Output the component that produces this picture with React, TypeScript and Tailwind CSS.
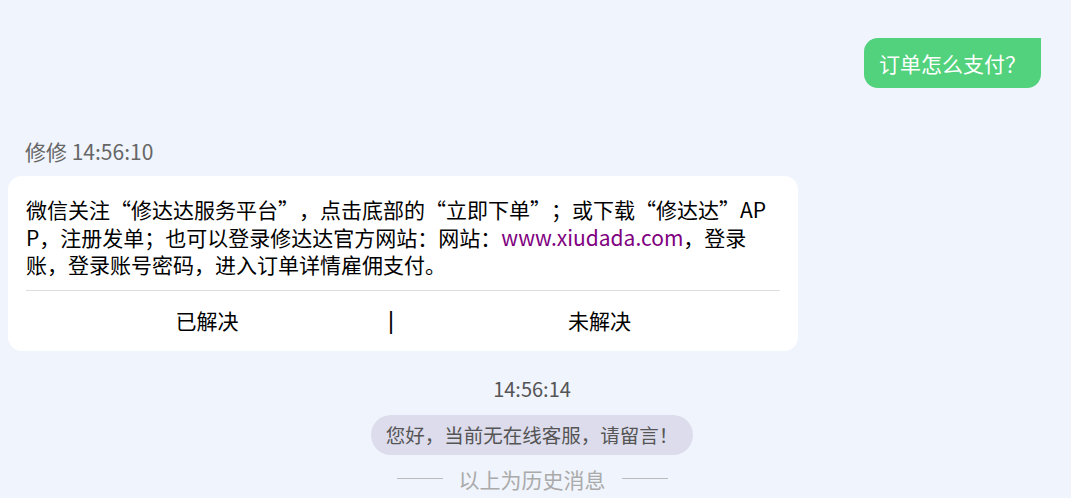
import React from "react";

const font = { fontFamily: '"Noto Sans CJK SC", "Noto Sans", sans-serif' };

// 全角引号：左引号靠右，右引号靠左
function LQ() {
  return <span className="inline-block w-[21px] text-right">“</span>;
}
function RQ() {
  return <span className="inline-block w-[21px] text-left">”</span>;
}

export default function App() {
  return (
    <main
      lang="zh-CN"
      style={font}
      className="w-[1071px] h-[498px] overflow-hidden bg-[#f0f4fc] pt-[38px]"
    >
      {/* 用户消息 */}
      <div className="flex justify-end pr-[30px]">
        <div className="bg-[#52d27c] text-white text-[21px] leading-[50px] h-[50px] px-[15px] rounded-[14px] rounded-tr-none">
          订单怎么支付？
        </div>
      </div>

      {/* 客服回复 */}
      <div className="mt-[50px] pl-[25px] text-[21px] leading-[26px] text-[#666]">
        修修 14:56:10
      </div>
      <div className="mt-[12px] ml-[8px] w-[790px] bg-white rounded-[14px] px-[18px]">
        <div className="pt-[20px] text-[21px] leading-[27.5px] text-black">
          <div className="whitespace-nowrap">
            微信关注<LQ />修达达服务平台<RQ />，点击底部的<LQ />立即下单<RQ />；或下载<LQ />修达达<RQ />AP
          </div>
          <div className="whitespace-nowrap">
            P，注册发单；也可以登录修达达官方网站：网站：
            <span className="text-[#800080]">www.xiudada.com</span>，登录
          </div>
          <div className="whitespace-nowrap">账，登录账号密码，进入订单详情雇佣支付。</div>
        </div>
        <div className="mt-[11px] border-t border-[#dddddd]" />
        <div className="flex items-center h-[60px] text-[21px] text-black">
          <button className="w-[362px] text-center">已解决</button>
          <span className="w-[5px] text-center text-black font-['Liberation_Sans'] text-[23px] leading-[24px]">|</span>
          <button className="flex-1 pl-[26px] text-center">未解决</button>
        </div>
      </div>

      {/* 系统消息 */}
      <div className="pr-[7px]">
        <div className="mt-[25px] text-center text-[20px] leading-[26px] text-[#555]">14:56:14</div>
        <div className="mt-[13px] flex justify-center">
          <div className="h-[40px] leading-[40px] px-[15px] rounded-full bg-[#dddcec] text-[19.5px] text-[#555]">
            您好，当前无在线客服，请留言！
          </div>
        </div>
        <div className="mt-[11px] flex items-center justify-center gap-[16px] text-[21px] leading-[26px] text-[#aaaaaa]">
          <span className="w-[46px] h-px bg-[#bbbbbb]" />
          <span>以上为历史消息</span>
          <span className="w-[46px] h-px bg-[#bbbbbb]" />
        </div>
      </div>
    </main>
  );
}
